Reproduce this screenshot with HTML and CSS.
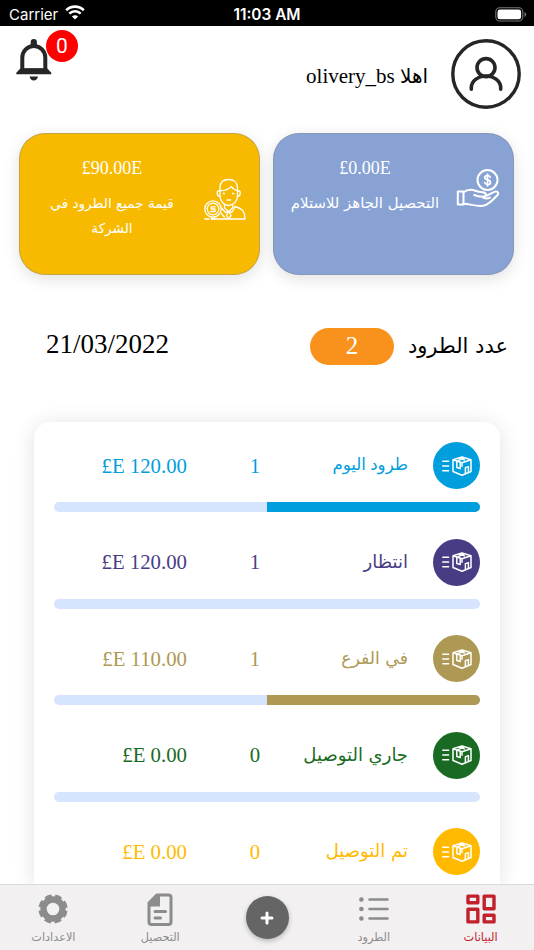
FILE: index.html
```
<!DOCTYPE html>
<html lang="ar" dir="rtl">
<head>
    <meta charset="UTF-8">
    <meta name="viewport" content="width=device-width, initial-scale=1.0">
    <title>olivery</title>
    <link rel="stylesheet" href="styles.css">
</head>
<body>
    <svg class="symbols" width="0" height="0">
        <symbol id="box" viewBox="0 0 32 22">
            <g fill="none" stroke="#fff" stroke-width="1.5" stroke-linejoin="round" stroke-linecap="round">
                <path d="M1.8 6.2h5.8M1.8 11h5.8M1.8 15.8h5.8" />
                <path d="M12 4.7 21 2l9 2.7v11.8L21 20.2l-9-3.7zM12 4.7l9 3 9-3M21 7.7v3.5" />
                <path d="M15.8 6.2v6.3l3.4 1V7.3M17 5.6l5.500-2.400M18.500 3.300l5 1.600M24.400 18.400v-5.800l3-1v5.500" />
            </g>
        </symbol>
    </svg>

    <div class="status-bar" dir="ltr">
        <div class="carrier">
            <span>Carrier</span>
            <svg width="20" height="15" viewBox="0 0 20 15" fill="none" stroke="#fff" stroke-width="2.6">
                <path d="M1.2 5.2a12.6 12.6 0 0 1 17.6 0" />
                <path d="M4.3 8.6a8.2 8.2 0 0 1 11.4 0" />
                <path d="M10 14.6 6.9 11.5a4.4 4.4 0 0 1 6.2 0z" fill="#fff" stroke="none" />
            </svg>
        </div>
        <span class="clock">11:03 AM</span>
        <div class="battery">
            <svg width="32" height="15" viewBox="0 0 32 15">
                <rect x=".8" y=".8" width="27" height="13.2" rx="4" fill="none" stroke="#777" stroke-width="1.1" />
                <rect x="2.5" y="2.5" width="23.6" height="9.8" rx="2.4" fill="#fff" />
                <path d="M29.5 5v5q1.7-.8 1.7-2.5T29.5 5z" fill="#777" />
            </svg>
        </div>
    </div>

    <header class="header">
        <svg class="avatar" width="70" height="70" viewBox="0 0 70 70" fill="none" stroke="#262626">
            <circle cx="35" cy="35" r="33.2" stroke-width="3.4" />
            <circle cx="35" cy="28.6" r="9" stroke-width="3.6" />
            <path d="M20.3 50.2v-1.6a14.7 11.6 0 0 1 29.4 0v1.6" stroke-width="3.6" stroke-linecap="round" />
        </svg>
        <div class="greeting"><span class="ar">اهلا</span> <bdi>olivery_bs</bdi></div>
        <div class="bell">
            <svg width="36" height="42" viewBox="0 0 36 42">
                <path d="M6.3 31V18.5a11.5 11.5 0 0 1 23 0V31" fill="none" stroke="#262626" stroke-width="4" />
                <path d="M14.7 7V3.1a3.1 3.1 0 0 1 6.2 0V7zM4.3 29.5h27l4 4.2v1.5H.3v-1.5zM13.5 37.5H22q-1 4-4.2 4t-4.3-4z" fill="#262626" />
                <path d="M8.3 30.5h19" stroke="#262626" stroke-width="2.5" />
            </svg>
            <span class="badge">0</span>
        </div>
    </header>

    <section class="cards">
        <div class="card card-blue">
            <svg class="card-icon hand" width="44" height="40" viewBox="0 0 44 40" fill="none" stroke="#fff" stroke-width="2" stroke-linejoin="round" stroke-linecap="round">
                <circle cx="31.5" cy="12" r="10" />
                <path d="M34.2 9.3q-.7-1.800-2.800-1.800-2.600 0-2.600 2 0 1.800 2.800 2.300 2.900.6 2.900 2.600 0 2.100-2.900 2.100-2.400 0-3-1.900M31.5 6v12" stroke-width="1.7" />
                <path d="M1.800 23.500h5.700v13H1.800z" />
                <path d="M7.500 24.200c4-3 8.500-3 12.500-1.200 2.500 1.200 5.500.6 8 1.500 2.800 1 2 4.200-.8 4.200-3.500 0-6-.2-9-1.700M28.500 28.300c3.500-.2 8.200-4.300 11-4.700 2.800-.3 3.600 1.800 2 3.400-3.300 3.500-7.500 8.500-12.500 10.300-7 2.200-14-1.300-21.500-1.600" />
                <path d="M27 29.500q4 2 7 0" />
            </svg>
            <div class="card-text">
                <div class="sum" dir="ltr">£0.00E</div>
                <div class="desc ar">التحصيل الجاهز للاستلام</div>
            </div>
        </div>
        <div class="card card-yellow">
            <svg class="card-icon agent" width="42" height="42" viewBox="0 0 42 42" fill="none" stroke="#fff" stroke-width="1.3" stroke-linejoin="round" stroke-linecap="round">
                <path d="M16 13V9.5C16 4.5 19 1.5 24.5 1.5S33.5 4.5 33.5 9.5V18c0 5-4 9.5-9 9.5S16 22.5 16 18z" />
                <path d="M16 12.5q6.5.5 11.5-4 2 3.5 6 4M16 13h-1.8q-1 0-1 2.5t2.8 3M33.5 13h1.7q1 0 1 2.5t-2.7 3M19.3 15.500h1.200M28.500 15.500h1.200M23 22h3.500" />
                <path d="M20.5 26.5v3.2l4 4 4.300-4v-3.200M18 30.500l3.500 4 3-1.500 3.200 1.500 3-5M24.500 33l-2 4.500 2 3.500 2.500-3.500zM30.800 28.500c6 1.500 10.200 3.500 10.200 12.500H17M.800 41H5M7 41h10M17.300 35.500l3 3.500" />
                <circle cx="9" cy="31" r="8.2" />
                <circle cx="9" cy="31" r="5.8" />
                <path d="M11.3 28.800H7.300v2.200h3.700v2.500H6.700M8 39v2M10.500 39v2" />
            </svg>
            <div class="card-text">
                <div class="sum" dir="ltr">£90.00E</div>
                <div class="desc ar">قيمة جميع الطرود في الشركة</div>
            </div>
        </div>
    </section>

    <section class="summary">
        <span class="summary-label ar">عدد الطرود</span>
        <span class="pill">2</span>
        <span class="date" dir="ltr">21/03/2022</span>
    </section>

    <main class="panel">
        <div class="status today">
            <div class="row">
                <span class="circle"><svg width="32" height="22"><use href="#box" /></svg></span>
                <span class="name ar">طرود اليوم</span>
                <span class="count">1</span>
                <span class="amount"><bdi dir="ltr">£E 120.00</bdi></span>
            </div>
            <div class="progress"><div class="fill half"></div></div>
        </div>
        <div class="status waiting">
            <div class="row">
                <span class="circle"><svg width="32" height="22"><use href="#box" /></svg></span>
                <span class="name ar">انتظار</span>
                <span class="count">1</span>
                <span class="amount"><bdi dir="ltr">£E 120.00</bdi></span>
            </div>
            <div class="progress"></div>
        </div>
        <div class="status branch">
            <div class="row">
                <span class="circle"><svg width="32" height="22"><use href="#box" /></svg></span>
                <span class="name ar">في الفرع</span>
                <span class="count">1</span>
                <span class="amount"><bdi dir="ltr">£E 110.00</bdi></span>
            </div>
            <div class="progress"><div class="fill half"></div></div>
        </div>
        <div class="status delivering">
            <div class="row">
                <span class="circle"><svg width="32" height="22"><use href="#box" /></svg></span>
                <span class="name ar">جاري التوصيل</span>
                <span class="count">0</span>
                <span class="amount"><bdi dir="ltr">£E 0.00</bdi></span>
            </div>
            <div class="progress"></div>
        </div>
        <div class="status delivered">
            <div class="row">
                <span class="circle"><svg width="32" height="22"><use href="#box" /></svg></span>
                <span class="name ar">تم التوصيل</span>
                <span class="count">0</span>
                <span class="amount"><bdi dir="ltr">£E 0.00</bdi></span>
            </div>
        </div>
    </main>

    <nav class="tabs">
        <a class="tab active">
            <svg width="32" height="32" viewBox="0 0 32 32" fill="none" stroke="#c2202b" stroke-width="3.4">
                <path d="M3 3.1h9.8v6.6H3zM19.2 3.1H29v12.600h-9.800zM3 16.300h9.800v12.600H3zM19.200 22.300H29v6.600h-9.800z" stroke-linejoin="round" />
            </svg>
            <span class="ar">البيانات</span>
        </a>
        <a class="tab">
            <svg width="32" height="32" viewBox="0 0 32 32" stroke="#8c8c8c" stroke-width="2.6" stroke-linecap="round" fill="#8c8c8c">
                <path d="M11.5 6.5h18M11.5 16h18M11.5 25.5h18" />
                <circle cx="3.4" cy="6.5" r="1" />
                <circle cx="3.4" cy="16" r="1" />
                <circle cx="3.4" cy="25.5" r="1" />
            </svg>
            <span class="ar">الطرود</span>
        </a>
        <a class="tab">
            <span class="add">
                <svg width="14" height="14" viewBox="0 0 14 14" stroke="#fff" stroke-width="3" stroke-linecap="round"><path d="M7 2v10M2 7h10" /></svg>
            </span>
        </a>
        <a class="tab">
            <svg width="32" height="34" viewBox="0 0 32 34" fill="none" stroke="#8c8c8c" stroke-linejoin="round">
                <path d="M12.8 2.1h11.700q2.500 0 2.500 2.500v24.500q0 2.500-2.500 2.500h-17q-2.500 0-2.500-2.500V10z" stroke-width="3" />
                <path d="M4.500 10.500 12.800 2h3.200v11.500H4.500z" fill="#8c8c8c" stroke="none" />
                <path d="M11 18.500h10.500M11 25h5.500" stroke-width="3" stroke-linecap="round" />
            </svg>
            <span class="ar">التحصيل</span>
        </a>
        <a class="tab">
            <svg width="32" height="32" viewBox="0 0 32 32">
                <g fill="none" stroke="#8c8c8c">
                    <circle cx="16" cy="16" r="9.5" stroke-width="6.4" />
                    <circle cx="16" cy="16" r="12.9" stroke-width="3.4" stroke-dasharray="6.6 3.53" stroke-dashoffset="-1.76" />
                </g>
            </svg>
            <span class="ar">الاعدادات</span>
        </a>
    </nav>
</body>
</html>
```
FILE: styles.css
```
* {
    box-sizing: border-box;
}

body {
    font-family: "Liberation Serif", "DejaVu Sans", serif;
    background-color: #fff;
    color: #000;
    margin: 0;
    height: 950px;
    display: flex;
    flex-direction: column;
    overflow: hidden;
}

svg {
    display: block;
    flex-shrink: 0;
}

.symbols {
    position: absolute;
}

.ar {
    font-family: "DejaVu Sans", sans-serif;
}

/* status bar */
.status-bar {
    height: 26px;
    flex-shrink: 0;
    display: grid;
    grid-template-columns: 1fr auto 1fr;
    align-items: center;
    padding: 2px 7px 0 9px;
    background: #000;
    color: #fff;
    font-family: Inter, sans-serif;
    font-size: 15px;
}

.carrier {
    display: flex;
    gap: 7px;
    align-items: center;
}

.carrier svg {
    margin-top: -3px;
}

.clock {
    font-weight: 600;
    font-size: 15.4px;
    margin-right: 2px;
}

.battery {
    justify-self: end;
}

/* header */
.header {
    height: 107px;
    flex-shrink: 0;
    display: flex;
    align-items: flex-start;
    padding: 13px 13px 0 16px;
}

.greeting {
    margin: 24px 23px 0 0;
    font-size: 21px;
    line-height: 26px;
    white-space: nowrap;
}

.greeting .ar {
    font-size: 20px;
    line-height: 1;
}

.bell {
    position: relative;
    margin-right: auto;
}

.badge {
    position: absolute;
    left: 30px;
    top: -9px;
    width: 32px;
    height: 32px;
    border-radius: 50%;
    background: #f00;
    color: #fff;
    font-family: Roboto, sans-serif;
    font-size: 21px;
    line-height: 32px;
    text-align: center;
}

/* cards */
.cards {
    display: flex;
    gap: 13px;
    padding: 0 20px 0 19px;
}

.card {
    flex: 1;
    height: 142px;
    display: flex;
    border: 1px solid rgba(130, 140, 150, 0.45);
    border-radius: 26px;
    padding: 24px 13px 0 16px;
    color: #fff;
    box-shadow: 0 4px 16px rgba(0, 0, 0, 0.12);
}

.card-blue {
    background: #88a2d4;
}

.card-yellow {
    background: #f8ba00;
}

.hand {
    margin-top: 10px;
}

.agent {
    margin-top: 20px;
}

.card-text {
    flex: 1;
    text-align: center;
    margin-right: 16px;
    white-space: nowrap;
}

.card-yellow .card-text {
    padding: 0 12px;
    white-space: normal;
}

.sum {
    font-size: 18px;
    line-height: 20px;
}

.desc {
    font-size: 14.9px;
    line-height: 25px;
    margin-top: 13px;
}

.card-yellow .desc {
    font-size: 13.6px;
}

/* parcel count and date */
.summary {
    display: flex;
    align-items: center;
    height: 38px;
    margin-top: 52px;
    padding: 0 26px 0 46px;
    font-size: 27px;
}

.summary-label {
    font-size: 21px;
}

.pill {
    width: 84px;
    height: 37px;
    margin-top: 1px;
    margin-right: 14px;
    border-radius: 19px;
    background: #f9921d;
    color: #fff;
    font-size: 25px;
    line-height: 36px;
    text-align: center;
}

.date {
    margin-right: auto;
    margin-top: -4px;
}

/* status list */
.panel {
    flex: 1;
    min-height: 0;
    margin: 57px 34px 0;
    padding: 19.5px 20px 0;
    border-radius: 16px 16px 0 0;
    box-shadow: 0 2px 22px rgba(0, 0, 0, 0.12);
}

.status {
    height: 96.6px;
}

.row {
    display: grid;
    grid-template-columns: 47px 148px 60px 1fr;
    align-items: center;
    height: 48px;
    font-size: 20.8px;
}

.circle {
    width: 47px;
    height: 47px;
    border-radius: 50%;
    background: currentColor;
    display: flex;
    align-items: center;
    justify-content: center;
}

.name {
    padding-right: 25px;
    margin-top: -2px;
    font-size: 18px;
    white-space: nowrap;
}

.today .name {
    font-size: 16.6px;
    word-spacing: -1px;
}

.branch .name {
    font-size: 17.3px;
}

.count {
    text-align: center;
}

.amount {
    padding-right: 38px;
}

.progress {
    height: 10px;
    margin-top: 12.5px;
    border-radius: 5px;
    background: #d6e4fd;
    overflow: hidden;
}

.fill {
    height: 100%;
    background: currentColor;
}

.half {
    width: 50%;
}

.today { color: #019edd; }
.waiting { color: #483d85; }
.branch { color: #ad9953; }
.delivering { color: #196b24; }
.delivered { color: #ffba00; }

/* bottom tabs */
.tabs {
    position: relative;
    height: 66px;
    flex-shrink: 0;
    display: flex;
    background: #f2f0f1;
    border-top: 1px solid #d9d9d9;
}

.tab {
    flex: 1;
    display: flex;
    flex-direction: column;
    align-items: center;
    justify-content: space-between;
    padding: 8px 0 1px;
    color: #8c8c8c;
    font-size: 11.3px;
    line-height: 22px;
}

.active {
    color: #c2202b;
}

.add {
    width: 43px;
    height: 43px;
    margin-top: 3px;
    border-radius: 50%;
    background: #656565;
    box-shadow: 0 2px 5px rgba(0, 0, 0, 0.25);
    display: flex;
    align-items: center;
    justify-content: center;
}
```
